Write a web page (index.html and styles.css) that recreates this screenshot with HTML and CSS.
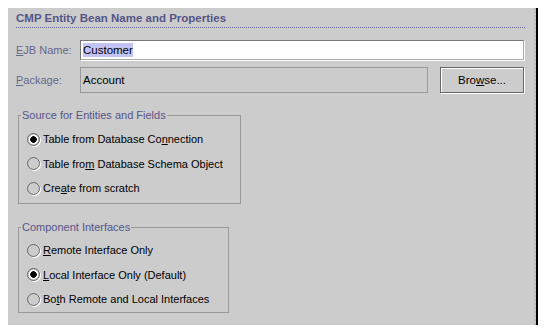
FILE: index.html
```html
<!DOCTYPE html>
<html>
<head>
<meta charset="utf-8">
<link rel="stylesheet" href="styles.css">
</head>
<body>
<div class="panel">
  <div class="title">CMP Entity Bean Name and Properties</div>
  <div class="row row-name">
    <label class="lbl"><u>E</u>JB Name:</label>
    <div class="field field-name"><span class="sel">Customer</span></div>
  </div>
  <div class="row row-pkg">
    <label class="lbl"><u>P</u>ackage:</label>
    <div class="field field-pkg">Account</div>
    <button class="btn">Bro<u>w</u>se...</button>
  </div>
  <fieldset class="group group1">
    <legend>Source for Entities and Fields</legend>
    <div class="opt"><span class="radio on"></span><span>Table from Database Co<u>n</u>nection</span></div>
    <div class="opt"><span class="radio"></span><span>Table fro<u>m</u> Database Schema Object</span></div>
    <div class="opt"><span class="radio"></span><span>Cre<u>a</u>te from scratch</span></div>
  </fieldset>
  <fieldset class="group group2">
    <legend>Component Interfaces</legend>
    <div class="opt"><span class="radio"></span><span><u>R</u>emote Interface Only</span></div>
    <div class="opt"><span class="radio on"></span><span><u>L</u>ocal Interface Only (Default)</span></div>
    <div class="opt"><span class="radio"></span><span>Bo<u>t</u>h Remote and Local Interfaces</span></div>
  </fieldset>
</div>
</body>
</html>
```
FILE: styles.css
```css
html, body {
  margin: 0;
  padding: 0;
  background: #ffffff;
}
body {
  font-family: "Liberation Sans", Arial, sans-serif;
  font-size: 11px;
  color: #000;
}
.panel {
  margin: 8px 0 0 8px;
  width: 526px;
  height: 317px;
  background: #cccccc;
  border-right: 2px dotted #b8b8b8;
  box-shadow: 2px 0 0 #000;
  display: flex;
  flex-direction: column;
  white-space: nowrap;
}
.title {
  margin: 4px 0 0 8px;
  width: 509px;
  font-weight: bold;
  font-size: 11.5px;
  color: #555588;
  height: 12px;
  line-height: 12px;
  padding-bottom: 3px;
  border-bottom: 1px dotted #6a6a99;
}
.row {
  display: flex;
  align-items: stretch;
}
.lbl {
  width: 64px;
  padding-left: 8px;
  color: #666688;
  display: flex;
  align-items: center;
}
.row-name {
  margin-top: 12px;
  height: 20px;
}
.field {
  box-sizing: border-box;
  display: flex;
  align-items: center;
  padding-left: 2px;
  font-size: 11.5px;
}
.field-name {
  width: 444px;
  background: #fff;
  border: 1px solid #777;
  border-right-color: #aaa;
  border-bottom-color: #aaa;
  box-shadow: 1px 1px 0 #fff;
}
.sel {
  background: #c4c4f4;
  padding: 1px 0;
}
.row-pkg {
  margin-top: 7px;
  height: 26px;
}
.field-pkg {
  width: 348px;
  background: #cccccc;
  border: 1px solid #999;
}
.btn {
  margin-left: 12px;
  width: 84px;
  box-sizing: border-box;
  background: #cccccc;
  border: 1px solid #666;
  box-shadow: 1px 1px 0 #fff, inset 1px 1px 0 #fff;
  font-family: inherit;
  font-size: 11.5px;
  color: #000;
  padding: 0;
}
.group {
  margin: 0 0 0 10px;
  padding: 0 8px;
  border: 1px solid #999;
  display: flex;
  flex-direction: column;
  box-sizing: border-box;
  min-width: 0;
}
.group legend {
  padding: 0 1px;
  margin-left: -6px;
  color: #555588;
  font-size: 11px;
  line-height: 14px;
}
.group1 {
  margin-top: 15px;
  width: 223px;
  height: 96px;
}
.group2 {
  margin-top: 16px;
  width: 211px;
  height: 93px;
}
.opt {
  display: flex;
  align-items: center;
  gap: 3px;
  height: 24.5px;
  flex: none;
}
.group1 .opt:first-of-type { margin-top: 5px; }
.group2 .opt:first-of-type { margin-top: 4px; }
.radio {
  width: 13px;
  height: 13px;
  box-sizing: border-box;
  border-radius: 50%;
  border: 1px solid #666;
  background: #cccccc;
  box-shadow: 1px 1px 0 #fff;
  flex: none;
}
.radio.on {
  background: radial-gradient(circle, #000 0 3px, #fff 3.5px 4.5px, #ccc 5px);
}
```
